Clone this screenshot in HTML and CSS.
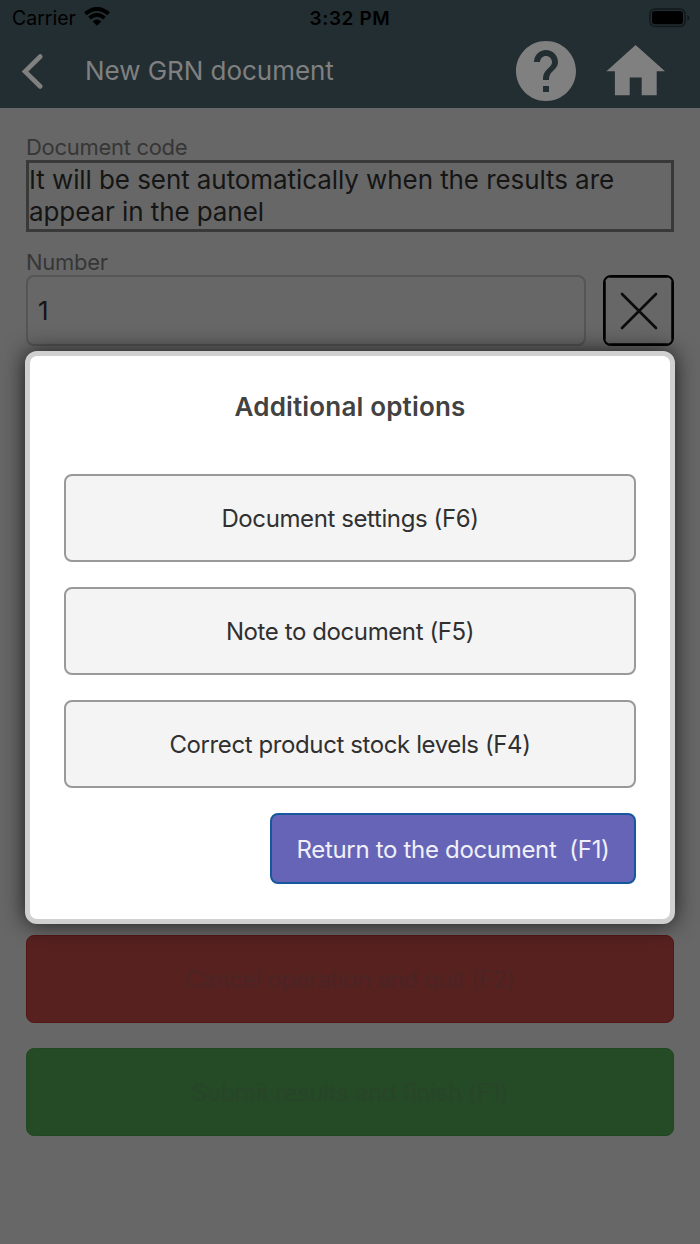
FILE: index.html
```html
<!DOCTYPE html>
<html lang="en">
<head>
<meta charset="utf-8">
<title>New GRN document</title>
<link rel="stylesheet" href="styles.css">
</head>
<body>
<div class="screen">
  <header class="top">
    <div class="status">
      <div class="carrier"><span class="carrier-name">Carrier</span>
        <svg class="wifi" width="26" height="19" viewBox="0 0 26 19" fill="none" stroke="#000" stroke-width="3.900"><path d="M1.400 6.700Q13-2.900 24.600 6.700M5.500 11Q13 4.700 20.500 11"/><path d="M8.600 14.500Q13 10.700 17.400 14.500L13 18.800Z" fill="#000" stroke="none"/></svg>
      </div>
      <span class="clock">3:32 PM</span>
      <svg class="battery" width="42" height="20" viewBox="0 0 42 20"><rect x="1" y="1" width="35" height="17.500" rx="5" fill="none" stroke="#12191b" stroke-width="1.500"/><rect x="3" y="3" width="31" height="13.200" rx="3" fill="#000"/><path d="M38.400 7v5.800q2-.8 2-2.900t-2-2.900z" fill="#12191b"/></svg>
    </div>
    <div class="nav">
      <svg class="back" width="24" height="38" viewBox="0 0 24 38" fill="none" stroke="#808080" stroke-width="4.600" stroke-linecap="round" stroke-linejoin="miter"><path d="M20.300 4.500L5 19.500L20.300 34.500"/></svg>
      <h1 class="title">New GRN document</h1>
      <svg class="help" width="60" height="60" viewBox="2 2 20 20" fill="#808080"><path d="M12 2C6.480 2 2 6.480 2 12s4.480 10 10 10 10-4.480 10-10S17.520 2 12 2zm1 17h-2v-2h2v2zm2.070-7.750l-.9.920C13.450 12.900 13 13.500 13 15h-2v-.5c0-1.100.450-2.100 1.170-2.830l1.240-1.260c.370-.360.590-.860.590-1.410 0-1.100-.9-2-2-2s-2 .9-2 2H8c0-2.210 1.790-4 4-4s4 1.790 4 4c0 .880-.360 1.680-.930 2.250z"/></svg>
      <svg class="home" width="60" height="52" viewBox="0 0 60 52" fill="#808080"><path d="M29.600 0L59 26.300H50.700V50.300H35.700V32.600H23.700V50.300H8.900V26.300H.4Z"/></svg>
    </div>
  </header>
  <main class="form">
    <label class="label">Document code</label>
    <div class="code">It will be sent automatically when the results are<br>appear in the panel</div>
    <label class="label number-label">Number</label>
    <div class="row">
      <div class="input">1</div>
      <div class="clear"><svg width="67" height="67" viewBox="0 0 67 67" fill="none" stroke="#000"><rect x=".5" y=".5" width="66" height="66" stroke="#181818"/><path d="M17 17L51 51M51 17L17 51" stroke="#0b0b0b" stroke-width="2.600" stroke-linecap="round"/></svg></div>
    </div>
    <div class="actions">
      <div class="action cancel"><span>Cancel operation and quit (F2)</span></div>
      <div class="action submit"><span>Submit results and finish (F1)</span></div>
    </div>
  </main>
  <section class="modal">
    <h2 class="modal-title">Additional options</h2>
    <div class="option">Document settings (F6)</div>
    <div class="option">Note to document (F5)</div>
    <div class="option">Correct product stock levels (F4)</div>
    <div class="return">Return to the document&nbsp; (F1)</div>
  </section>
</div>
</body>
</html>
```
FILE: styles.css
```css
* { box-sizing: border-box; }
body { margin: 0; font-family: Inter, "Liberation Sans", sans-serif; }
.screen { position: relative; width: 700px; height: 1244px; background: #676767; display: flex; flex-direction: column; overflow: hidden; white-space: nowrap; }
.top { height: 108px; background: #232e32; color: #000; flex: none; }
.status { height: 35px; display: grid; grid-template-columns: 1fr auto 1fr; align-items: center; padding: 1px 9px 0 9px; font-size: 19.5px; }
.carrier { display: flex; align-items: center; gap: 8px; padding-left: 3px; }
.wifi { margin-top: -4px; }
.clock { font-weight: 600; font-size: 19px; letter-spacing: 0.6px; }
.battery { justify-self: end; margin-top: -1px; }
.nav { height: 73px; display: flex; align-items: center; padding: 0 34px 2px 20px; }
.title { margin: 0 auto 0 41px; font-size: 26px; font-weight: 400; color: #808080; letter-spacing: -0.04px; }
.help { margin-right: 30px; }
.form { flex: 1; display: flex; flex-direction: column; padding: 25px 26px 108px; }
.label { height: 27px; line-height: 28px; font-size: 22px; color: #363636; letter-spacing: -0.3px; }
.code { height: 72px; border: 3px solid #393939; font-size: 26px; line-height: 32px; color: #151515; padding-top: 1px; letter-spacing: -0.08px; }
.number-label { margin-top: 16px; }
.row { display: flex; gap: 17px; height: 71px; }
.input { width: 561px; border: 2px solid #555; border-radius: 8px; padding-left: 10px; font-size: 26px; line-height: 68px; color: #151515; }
.clear { width: 71px; height: 71px; border: 2px solid #000; border-radius: 8px; overflow: hidden; }
.clear svg { display: block; }
.actions { margin-top: auto; display: flex; flex-direction: column; gap: 25px; }
.action { height: 88px; border-radius: 8px; display: flex; align-items: center; justify-content: center; font-size: 24px; }
.cancel { background: #572120; border: 1px solid #551616; color: #4b2424; letter-spacing: -0.5px; }
.submit { background: #254a26; border: 1px solid #1e4921; color: #294529; letter-spacing: -0.37px; }
.modal { position: absolute; left: 25px; top: 351px; width: 650px; height: 573px; background: #fff; border: 5px solid #d0d0d0; border-radius: 12px; box-shadow: 0 0 22px rgba(0,0,0,.75); padding: 34px 34px 0; display: flex; flex-direction: column; }
.modal-title { margin: 0 0 50px; height: 34px; line-height: 34px; text-align: center; font-size: 26px; font-weight: 600; color: #424242; letter-spacing: 0.17px; }
.option { height: 88px; margin-bottom: 25px; border: 2px solid #999; border-radius: 8px; background: #f4f4f4; color: #303030; font-size: 24px; line-height: 86px; text-align: center; letter-spacing: -0.4px; }
.return { align-self: flex-end; width: 366px; height: 71px; border: 2px solid #17579c; border-radius: 8px; background: #6664b7; color: #f0f0f7; font-size: 24px; line-height: 69px; text-align: center; letter-spacing: -0.32px; }
```
